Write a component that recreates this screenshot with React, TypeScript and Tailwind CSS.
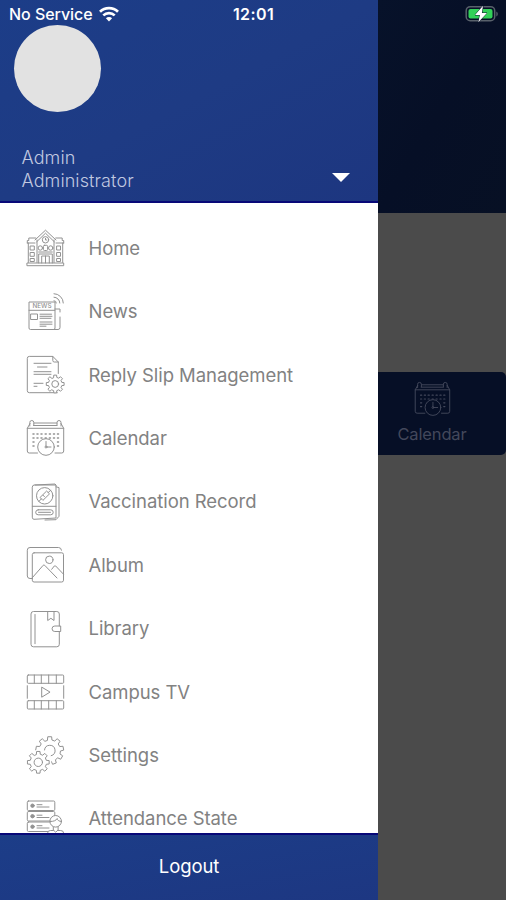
import type { ReactNode } from 'react';

function gearPath(cx: number, cy: number, outer: number, inner: number, teeth = 8) {
  const step = (Math.PI * 2) / teeth;
  const points: string[] = [];
  for (let i = 0; i < teeth; i++) {
    const corners = [
      [inner, -0.3],
      [outer, -0.2],
      [outer, 0.2],
      [inner, 0.3],
    ];
    corners.forEach(([r, offset]) => {
      const a = (i + offset) * step - Math.PI / 2;
      points.push(`${(cx + r * Math.cos(a)).toFixed(2)} ${(cy + r * Math.sin(a)).toFixed(2)}`);
    });
  }
  return `M${points.join('L')}Z`;
}

function Icon({ children, className = 'w-[38px] h-[38px]' }: { children: ReactNode; className?: string }) {
  return (
    <svg
      viewBox="0 0 38 38"
      className={`${className} shrink-0 overflow-visible`}
      fill="none"
      stroke="currentColor"
      strokeWidth="1"
      strokeLinecap="round"
      strokeLinejoin="round"
    >
      {children}
    </svg>
  );
}

const HomeIcon = () => (
  <Icon>
    <path d="M9 11 19.5 1.2 30 11M10.7 12.8l8.8-8.6 8.8 8.6M11 11v22.5M28 11v22.5" />
    <path d="M2.3 14v19.5M36.7 14v19.5M1.3 14v-2.5h1.5V9h7M37.7 14v-2.5h-1.5V9h-6.5M1.3 14H9M30 14h7.7" />
    <path d="M1.3 34h36.4v2.7H1.3zM12.7 34V25h13.6v9M15.7 34v-7h7.6v7M19.5 27v7" />
    <circle cx="19.5" cy="10.8" r="3.2" />
    <path d="M19.5 9.3v1.7h1.2" />
    <circle cx="14.3" cy="19" r="2.2" />
    <rect x="17.4" y="16.3" width="4.2" height="5.2" rx="1" />
    <circle cx="24.7" cy="19" r="2.2" />
    <path d="M12.7 23h13.6" />
    <path d="M4.5 17h3.8v4H4.5zM4.5 23.5h3.8v3.8H4.5zM4.5 29.5h3.8v3H4.5zM31 17h3.5v4H31zM31 23.5h3.5v3.8H31zM31 29.5h3.5v3H31z" />
  </Icon>
);

const NewsIcon = () => (
  <Icon>
    <path d="M29 17.3V35a1.5 1.5 0 0 1-1.5 1.5h-23A1.5 1.5 0 0 1 3 35V9h26v8.3H3M29 16h5v3M34 24v10.5a2 2 0 0 1-2 2h-4.5" />
    <path d="M5 21h6.5v5.5H5zM14 21.2h11.5M14 23.3h12M14 25.3h11M14 29h12M14 31.2h12M14 33.2h6" />
    <path d="M28 7.7a2.3 2.3 0 0 1 2.3 2.3M28 4.2a5.8 5.8 0 0 1 5.8 5.8M28 .7a9.3 9.3 0 0 1 9.3 9.3" />
    <text
      x="16"
      y="15.4"
      textAnchor="middle"
      fontSize="6"
      fontWeight="500"
      fill="currentColor"
      stroke="none"
      textLength="19"
      lengthAdjust="spacingAndGlyphs"
    >
      NEWS
    </text>
  </Icon>
);

const ReplyIcon = () => (
  <Icon>
    <path d="M32.3 17.5V6L26.8.4H3.3a2 2 0 0 0-2 2v32.3a2 2 0 0 0 2 2h28M26.8.4v4.1A1.5 1.5 0 0 0 28.3 6h4" />
    <path d="M8 7.3h17M11.5 11H21M8 15.7h17M8 18.3h17M8 27.3h9M8 30.3h3" />
    <path d={gearPath(29.2, 28, 9, 6.8)} fill="white" />
    <circle cx="29.2" cy="28" r="3.4" />
  </Icon>
);

const calendarDots = [15, 19, 23, 27].flatMap((y, row) =>
  [7.5, 11.5, 15.5, 19.7, 23.9, 28, 32].filter((x) => row < 2 || x < 10 || x > 30).map((x) => [x, y]),
);

const CalendarIcon = ({ className }: { className?: string }) => (
  <Icon className={className}>
    <path d="M11.5 34H3.3a2 2 0 0 1-2-2V9.3L4 4.5M29 34h6.7a2 2 0 0 0 2-2V9.3L35 4.5M1.3 9.3h36.4M8 4h23M7.5 6.5H31" />
    <path d="M3.8 7V3.5a2 2 0 0 1 4 0v2.7M31 6.2V3.5a2 2 0 0 1 4 0V7" />
    {calendarDots.map(([x, y]) => (
      <path key={`${x}-${y}`} d={`M${x - 0.6} ${y}h1.2`} strokeWidth="1.3" />
    ))}
    <circle cx="20" cy="28" r="8.3" />
    <circle cx="20" cy="28" r="1" />
    <path d="M20 22.5V27M21 28h4" />
  </Icon>
);

const VaccinationIcon = () => (
  <Icon>
    <path d="M6.3 3.8a2 2 0 0 1 2-1.8H30v33L8 36.3a1.7 1.7 0 0 1-1.7-1.7zM6.3 23.3H30M30 3.8l3 .8v28.7l-3 3.4-11 .3M9 2l20-1 1 1" />
    <circle cx="18.7" cy="12.8" r="8.2" />
    <path d="m12.8 18.5 2.6-2.6M14.3 14.8l2.6 2.6 6.6-6.5-2.6-2.6zM22.2 9.6l2.4-2.4M17 12.2l1.4 1.4" />
    <rect x="9.7" y="26.8" width="17.5" height="5" rx="2.5" />
    <path d="M12.5 29.3h12" />
  </Icon>
);

const AlbumIcon = () => (
  <Icon>
    <path d="M6.3 32.5H4A2.7 2.7 0 0 1 1.3 30V4.2A2.7 2.7 0 0 1 4 1.5h28.5a3 3 0 0 1 3 2.7" />
    <rect x="6.3" y="6.8" width="31.2" height="29.2" rx="1.8" />
    <circle cx="23.3" cy="13.8" r="3.7" />
    <path d="M6.5 31.5 17.2 19.3a1 1 0 0 1 1.5 0L31 32M25.7 23.3l2.6-3.3a1 1 0 0 1 1.4 0l7.6 8" />
  </Icon>
);

const LibraryIcon = () => (
  <Icon>
    <path d="M33.3 16V4a2.5 2.5 0 0 0-2.5-2.5H7.5A2.5 2.5 0 0 0 5 4v30.3a2.5 2.5 0 0 0 2.5 2.5h23.3a2.5 2.5 0 0 0 2.5-2.5V21.5" />
    <path d="M9 4.5v29.2M21.7 1.5v9l3.2-2.2 3.1 2.2v-9M34.3 16h-5.5a2.75 2.75 0 0 0 0 5.5h5.5z" />
  </Icon>
);

const CampusIcon = () => (
  <Icon>
    <rect x="1.3" y="2" width="36.4" height="8.3" rx="1" />
    <rect x="1.3" y="27.7" width="36.4" height="8.3" rx="1" />
    <path d="M8.3 2v8.3M15.3 2v8.3M22.7 2v8.3M30.3 2v8.3M8.3 27.7V36M15.3 27.7V36M22.7 27.7V36M30.3 27.7V36" />
    <path d="M1.3 12.7v12.6M37.7 12.7v12.6M15.7 14.5v9.7l8-4.9z" />
  </Icon>
);

const SettingsIcon = () => (
  <Icon>
    <path d={gearPath(23.7, 14.6, 14, 10.8, 9)} />
    <path d="M18.5 14a5.3 5.3 0 1 1 6.7 5.7" />
    <path d={gearPath(12.3, 26.3, 13, 11.5)} fill="white" stroke="none" />
    <path d={gearPath(12.3, 26.3, 11, 8.3)} fill="white" />
    <circle cx="12.3" cy="26.3" r="4.2" />
  </Icon>
);

const AttendanceIcon = () => (
  <Icon>
    {[1, 11.5, 22].map((y) => (
      <g key={y}>
        <rect x="1.3" y={y} width="27.5" height="9.5" rx="1.2" />
        <circle cx="6.5" cy={y + 4.7} r="1.7" fill="currentColor" />
        <path d={`M11 ${y + 3.7}h5M11 ${y + 6}h12`} />
      </g>
    ))}
    <path d="M21.5 38v-4.5a3 3 0 0 1 3-3h10.2a3 3 0 0 1 3 3V38z" fill="white" />
    <path d="M27.3 26v4l2.4 2.2 2.4-2.2v-4" fill="white" />
    <circle cx="29.7" cy="21.3" r="5.8" fill="white" />
    <path d="M24 21.5c4 0 6-1 7.2-3 0 1.5 1.8 3 4.2 3" />
  </Icon>
);

const menuItems = [
  { label: 'Home', icon: <HomeIcon /> },
  { label: 'News', icon: <NewsIcon /> },
  { label: 'Reply Slip Management', icon: <ReplyIcon /> },
  { label: 'Calendar', icon: <CalendarIcon /> },
  { label: 'Vaccination Record', icon: <VaccinationIcon /> },
  { label: 'Album', icon: <AlbumIcon /> },
  { label: 'Library', icon: <LibraryIcon /> },
  { label: 'Campus TV', icon: <CampusIcon /> },
  { label: 'Settings', icon: <SettingsIcon /> },
  { label: 'Attendance State', icon: <AttendanceIcon /> },
];

function StatusBar() {
  return (
    <div className="absolute inset-x-0 top-0 h-7 text-white pointer-events-none">
      <div className="grid grid-cols-3 items-center h-7 pl-[9px] pr-[8px]">
        <div className="flex items-center gap-[6px]">
          <span className="text-[16px] font-medium tracking-[-0.05px] whitespace-nowrap">No Service</span>
          <svg viewBox="0 0 20 16" className="w-5 h-4" fill="none" stroke="currentColor" strokeWidth="2.7">
            <path d="M1 5.8a12.8 12.8 0 0 1 18 0M4.3 9.4a8.2 8.2 0 0 1 11.4 0" />
            <path d="M10 15.5 6.9 12.3a4.4 4.4 0 0 1 6.2 0z" fill="currentColor" stroke="none" />
          </svg>
        </div>
        <span className="text-[16px] font-semibold text-center tracking-[0.4px]">12:01</span>
        <svg viewBox="0 0 33 18" className="w-[33px] h-[18px] justify-self-end">
          <rect x="1.2" y="1.7" width="28.5" height="14" rx="4" fill="none" stroke="#58616b" strokeWidth="1.5" />
          <rect x="3.5" y="4" width="24" height="9.5" rx="2" fill="#32d158" />
          <path d="M31.3 6.500v5c2-.8 2-4.200 0-5z" fill="#58616b" />
          <path d="m18 .8-8 9.2h4.9l-1.600 7.200L22 8h-5.100z" fill="white" stroke="#07142a" strokeWidth="1" paintOrder="stroke" />
        </svg>
      </div>
    </div>
  );
}

export default function App() {
  return (
    <div className="relative flex w-full h-[900px] overflow-hidden bg-[#4b4b4b] font-['Inter',sans-serif]">
      {/* Drawer */}
      <aside className="flex flex-col w-[378px] h-full shrink-0 bg-white">
        <header className="flex flex-col h-[202.5px] shrink-0 bg-linear-to-br from-[#1c3d88] via-[#1e3b84] to-[#1d3680] border-b-2 border-[#080878] pt-[25px]">
          <div className="w-[87px] h-[87px] ml-[14px] rounded-full bg-[#e2e2e2]" />
          <div className="flex items-end justify-between mt-[34px] pl-[21.5px] pr-[28px]">
            <div className="text-[18px] leading-[23px] font-light tracking-[0.1px] text-[#c1c9e0]">
              <p>Admin</p>
              <p>Administrator</p>
            </div>
            <svg viewBox="0 0 18 9" className="w-[18px] h-[9px] mb-[10px]" fill="white">
              <path d="M0 0h18L9 9z" />
            </svg>
          </div>
        </header>

        <nav className="flex-1 min-h-0 overflow-hidden pt-[14px]">
          {menuItems.map(({ label, icon }) => (
            <div key={label} className="flex items-center h-[63.4px] gap-[24.5px] pl-[26px] text-[#929292]">
              {icon}
              <span className="pt-px text-[18.5px] tracking-[-0.06px] whitespace-nowrap text-[#828282]">{label}</span>
            </div>
          ))}
        </nav>

        <footer className="flex items-center justify-center h-[67px] shrink-0 bg-linear-to-br from-[#1c3d88] to-[#1d3782] border-t-2 border-[#080878] pb-px text-[18.5px] tracking-[-0.1px] text-white">
          Logout
        </footer>
      </aside>

      {/* Dimmed page behind the drawer */}
      <main className="flex-1">
        <div className="h-[213px] bg-linear-to-br from-[#07122a] via-[#060f26] to-[#071024]" />
        <div className="flex flex-col items-center h-[83px] mt-[159px] pt-[8px] pr-[20px] bg-[#060f26] rounded-r-[5px] text-[#43485b]">
          <CalendarIcon className="w-[36px] h-[38px]" />
          <span className="mt-[5px] text-[16.5px] leading-[22px] tracking-[-0.15px]">Calendar</span>
        </div>
      </main>

      <StatusBar />
    </div>
  );
}
